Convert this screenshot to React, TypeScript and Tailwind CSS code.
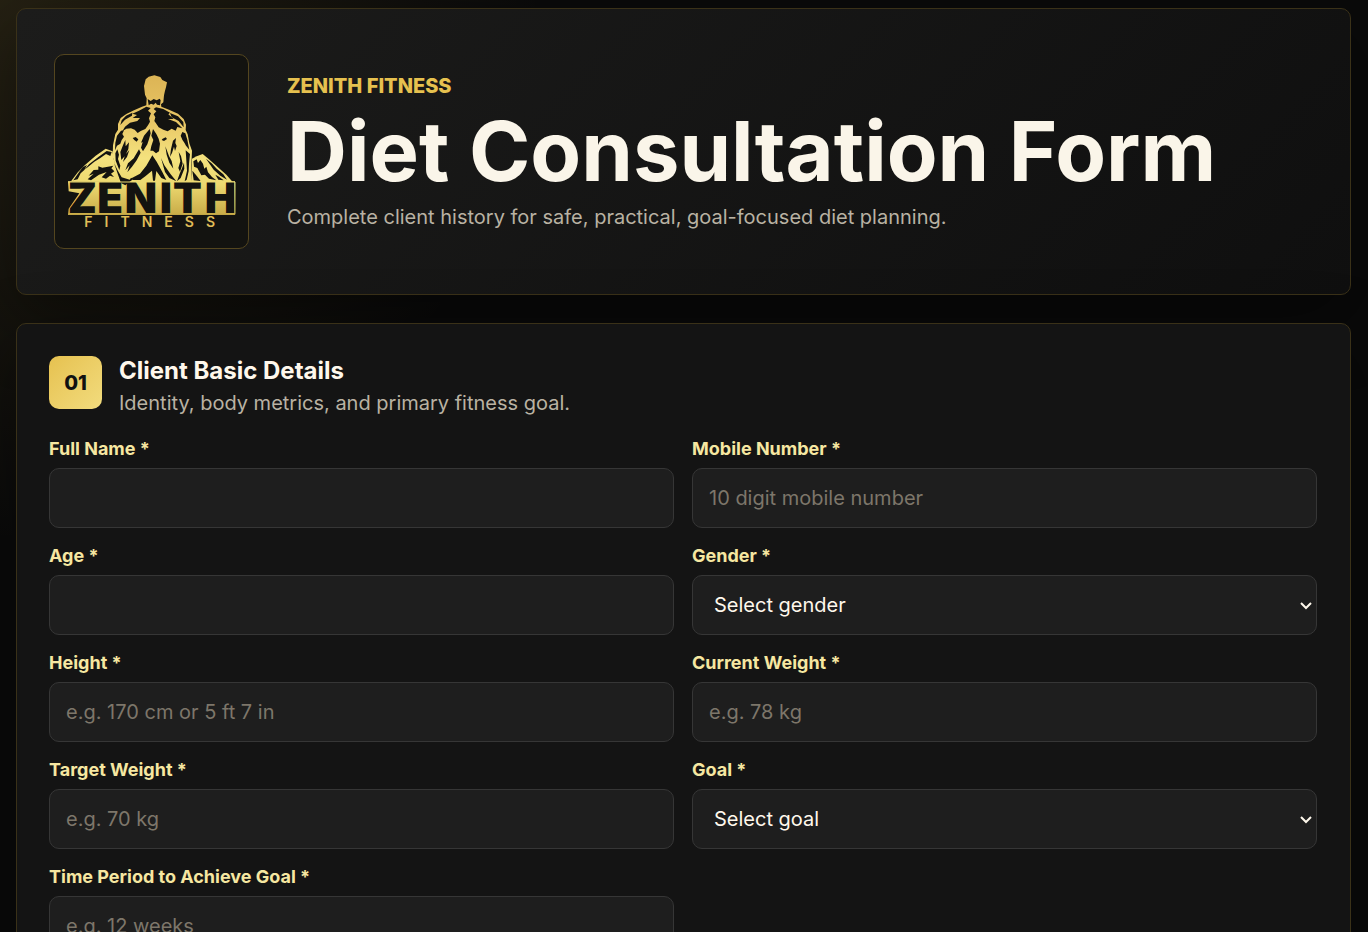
import { useState } from 'react';
import { clsx } from 'clsx';

type Field = {
  id: string;
  label: string;
  type?: string;
  placeholder?: string;
  options?: string[];
};

const basicFields: Field[] = [
  { id: 'fullName', label: 'Full Name' },
  { id: 'mobile', label: 'Mobile Number', type: 'tel', placeholder: '10 digit mobile number' },
  { id: 'age', label: 'Age', type: 'number' },
  { id: 'gender', label: 'Gender', placeholder: 'Select gender', options: ['Male', 'Female', 'Other'] },
  { id: 'height', label: 'Height', placeholder: 'e.g. 170 cm or 5 ft 7 in' },
  { id: 'weight', label: 'Current Weight', placeholder: 'e.g. 78 kg' },
  { id: 'targetWeight', label: 'Target Weight', placeholder: 'e.g. 70 kg' },
  { id: 'goal', label: 'Goal', placeholder: 'Select goal', options: ['Fat loss', 'Muscle gain', 'Maintenance'] },
  { id: 'period', label: 'Time Period to Achieve Goal', placeholder: 'e.g. 12 weeks' },
];

const controlClass =
  'h-[60px] w-full rounded-[10px] border border-[#363636] bg-[#1e1e1e] text-xl text-[#fff8ec] outline-none focus:border-[#e6c14f]';

function Logo() {
  return (
    <svg viewBox="15 15 579 579" className="block w-full" role="img" aria-label="Zenith Fitness">
      <defs>
        <linearGradient id="gold" gradientUnits="userSpaceOnUse" x1="0" y1="75" x2="0" y2="530">
          <stop offset="0" stopColor="#dcb455" />
          <stop offset="0.3" stopColor="#e8c665" />
          <stop offset="0.55" stopColor="#f4e27e" />
          <stop offset="0.72" stopColor="#ecd970" />
          <stop offset="0.92" stopColor="#c9ac48" />
          <stop offset="1" stopColor="#e5c258" />
        </linearGradient>
      </defs>

      {/* gold shapes */}
      <g fill="url(#gold)">
        <path d="M287 88L296 80L313 76L331 81L337 90L351 97L348 112L345 122L342 136L340 157L333 163L334 170L357 179L384 191L401 207L408 224L407 240L413 253L418 280L426 302L424 345L423 396H211L203 368L195 343L188 320L189 286L196 252L204 239V222L212 204L229 192L252 181L276 170L289 166L290 145L285 134L282 108Z" />
        <path d="M63 394L84 366L105 345L137 317L167 296L188 304L190 325L205 368L212 396Z" />
        <path d="M423 396L426 326L440 319L458 312L477 328L503 351L529 374L548 396Z" />
        <path d="M54 394H555V494H54L56 476L88 430L56 424Z" />
      </g>

      {/* muscle and rock shading */}
      <g fill="#131310">
        <path d="M293 147L302 153L311 147L320 151L329 146L332 151L330 166L321 164L317 158L311 164L303 161L296 166Z" />
        <path d="M289 170L302 174L294 182L303 190L297 205L300 215L294 226L286 237L272 243L263 249L254 239L243 235L229 236L217 244L225 230L240 218L262 213L270 204L248 204L261 195L247 191L267 182Z" />
        <path d="M318 172L340 177L360 188L355 193L371 207L354 207L378 216L397 235L382 231L377 242L365 236L353 244L340 239L326 232L319 221L313 213L316 202L311 193L319 184L311 177Z" />
        <path d="M247 188L228 197L215 211L211 225L225 209L246 197Z" />
        <path d="M360 189L384 199L400 216L401 232L386 213L365 202Z" />
        <path d="M213 242L222 241L217 252L222 260L215 270L211 281L201 287L195 301L196 278L201 257Z" />
        <path d="M397 246L406 250L412 269L418 299L408 287L403 278L397 269L392 257Z" />
        <path d="M196 310L202 298L207 314L204 327L211 347L208 360L197 332Z" />
        <path d="M211 306L219 286L226 270L227 289L237 277L235 297L228 312L238 300L231 321L219 336L224 319L214 330Z" />
        <path d="M248 264L257 261L265 268L260 275L253 270Z" />
        <path d="M338 266L347 262L351 267L342 273L335 270Z" />
        <path d="M299 237L302 250L297 268L292 283L279 304L273 293L278 276L273 278L282 257Z" />
        <path d="M309 237L319 252L326 266L330 281L327 304L318 310L309 302L301 302L304 288L310 270L304 257Z" />
        <path d="M369 272L378 264L376 279L380 288L375 303L372 290L366 309L360 320L363 297Z" />
        <path d="M267 298L272 308L260 331L246 350L232 367L239 346L226 361L234 340L251 325Z" />
        <path d="M346 289L357 318L365 333L370 356L358 338L350 314Z" />
        <path d="M386 306L393 318L398 341L390 365L385 354L391 334Z" />
        <path d="M407 301L420 312L417 342L416 364L410 389L404 394L411 362Z" />
        <path d="M396 355L402 338L403 356L392 384L381 394L389 371Z" />
        <path d="M192 339L204 363L215 382L239 389L244 383L247 389L226 406L213 399L202 368Z" />
        <path d="M307 316L320 335L337 366L349 390L334 384L319 363L315 392H309L306 362L287 378L271 390H250L240 387L270 371L289 347Z" />
        <path d="M333 324L343 346L362 373L379 394L358 384L345 366Z" />
        <path d="M145 321L170 303L185 306L181 318L168 312L150 325L133 335L114 351L103 359L117 343Z" />
        <path d="M98 352L111 345L103 360L92 370L83 388L70 391L88 365Z" />
        <path d="M145 349L157 353L174 350L190 347L184 355L193 364L183 371L192 381L180 377L168 386L155 382L170 366L147 374L123 391L113 388L131 371L116 377L131 360L145 359Z" />
        <path d="M430 334L440 328L444 339L451 330L459 341L463 356L469 350L474 367L486 381L499 391L477 386L465 374L454 376L442 354L432 350Z" />
        <path d="M468 326L485 340L500 356L520 373L531 389L511 377L491 359Z" />
        <path d="M496 374L507 380L521 391L505 389Z" />
        <path d="M427 362L438 375L452 393L431 391Z" />
      </g>

      <text
        x="53 142 224 329 369 464"
        y="490"
        className="font-['Inter',sans-serif]"
        fontSize="126"
        fontWeight="900"
        fill="#131310"
      >
        ZENITH
      </text>
      <path d="M54 396H555V493H54" fill="none" stroke="url(#gold)" strokeWidth="3" />
      <text
        x="103"
        y="530"
        className="font-['Inter',sans-serif]"
        fontSize="42"
        fontWeight="600"
        letterSpacing="36"
        fill="#e0bd58"
      >
        FITNESS
      </text>
    </svg>
  );
}

function FormField({ field }: { field: Field }) {
  const [value, setValue] = useState('');

  return (
    <div className="flex flex-col gap-2">
      <label htmlFor={field.id} className="text-lg leading-[22px] font-bold text-[#f6e7a1]">
        {field.label} *
      </label>
      {field.options ? (
        <div className="relative">
          <select
            id={field.id}
            required
            value={value}
            onChange={(e) => setValue(e.target.value)}
            className={clsx(controlClass, 'appearance-none pr-8 pl-[21px]')}
          >
            <option value="">{field.placeholder}</option>
            {field.options.map((option) => (
              <option key={option} value={option}>{option}</option>
            ))}
          </select>
          <svg
            viewBox="0 0 12 8"
            className="pointer-events-none absolute top-[27px] right-[5px] h-2 w-3"
            fill="none"
            stroke="#fff8ec"
            strokeWidth="2"
            aria-hidden="true"
          >
            <path d="M1 1L6 6L11 1" />
          </svg>
        </div>
      ) : (
        <input
          id={field.id}
          type={field.type || 'text'}
          required
          value={value}
          placeholder={field.placeholder}
          onChange={(e) => setValue(e.target.value)}
          className={clsx(controlClass, 'px-4 placeholder:text-[#7d766a]')}
        />
      )}
    </div>
  );
}

export default function App() {
  return (
    <div className="min-h-screen bg-[#0a0a0a] bg-[radial-gradient(circle_at_top_left,rgba(230,193,79,0.12),transparent_544px)] pt-2 pr-[17px] pb-8 pl-4 font-['Inter',sans-serif] text-[#fff8ec]">
      <header className="flex items-center gap-[38px] rounded-[10px] border border-[#3a3118] bg-linear-135 from-[#1c1c1b] to-[#0f0f0f] px-[37px] py-[45px] shadow-[0_24px_70px_rgba(0,0,0,0.4)]">
        <div className="w-[195px] shrink-0 overflow-hidden rounded-[10px] border border-[#54461f] bg-[#131310]">
          <Logo />
        </div>
        <div>
          <p className="text-xl leading-[30px] font-extrabold text-[#e6c14f]">ZENITH FITNESS</p>
          <h1 className="mt-2 text-[83px] leading-[84px] font-bold text-[#faf5e9]">Diet Consultation Form</h1>
          <p className="mt-[9px] text-xl leading-[30px] text-[#b9b2a3]">
            Complete client history for safe, practical, goal-focused diet planning.
          </p>
        </div>
      </header>

      <form className="mt-7" onSubmit={(e) => e.preventDefault()}>
        <section className="rounded-[10px] border border-[#3a3118] bg-[#141414] pt-8 pr-[33px] pb-8 pl-8 shadow-[0_24px_70px_rgba(0,0,0,0.4)]">
          <div className="mb-5 flex items-start gap-[17px]">
            <span className="flex size-[53px] shrink-0 items-center justify-center rounded-[10px] bg-linear-135 from-[#e6c14f] to-[#f2dc7d] text-xl font-extrabold text-[#111111]">
              01
            </span>
            <div>
              <h2 className="text-2xl leading-[30px] font-bold">Client Basic Details</h2>
              <p className="mt-0.5 text-xl leading-[30px] text-[#b9b2a3]">Identity, body metrics, and primary fitness goal.</p>
            </div>
          </div>

          <div className="grid grid-cols-2 gap-x-[18px] gap-y-[17px]">
            {basicFields.map((field) => (
              <FormField key={field.id} field={field} />
            ))}
          </div>
        </section>
      </form>
    </div>
  );
}
